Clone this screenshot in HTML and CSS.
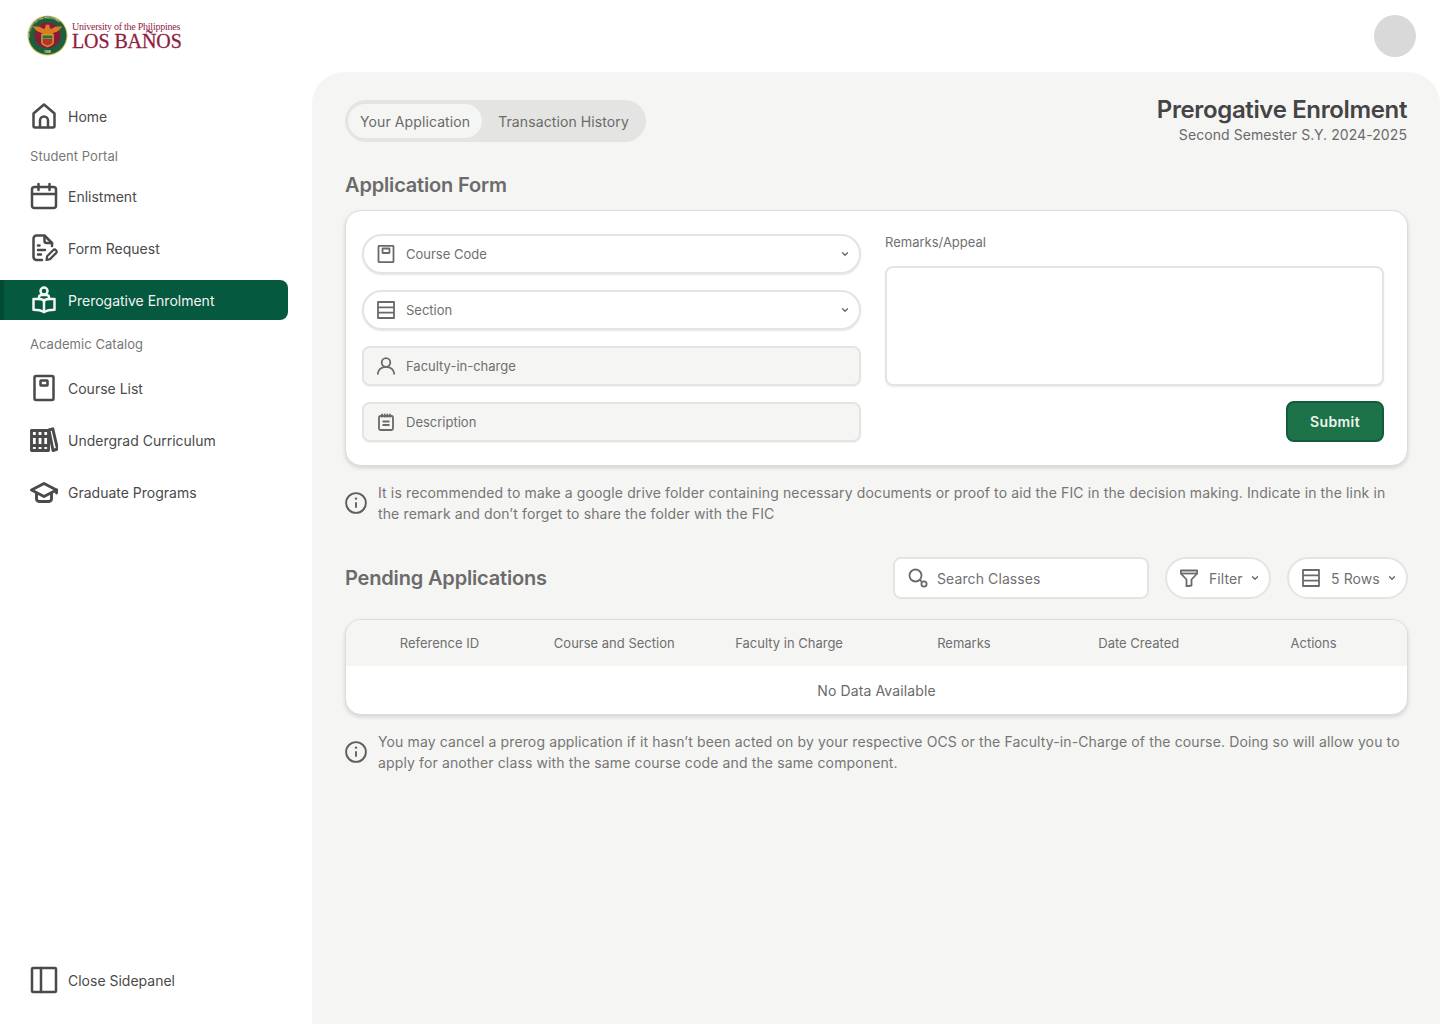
FILE: index.html
```html
<!DOCTYPE html>
<html lang="en">
<head>
<meta charset="utf-8">
<title>Prerogative Enrolment</title>
<link rel="stylesheet" href="styles.css">
</head>
<body>
<div class="app">
  <aside class="sidebar">
    <div class="brand">
      <svg class="seal" viewBox="0 0 42 42">
        <circle cx="21" cy="21" r="20.500" fill="#d8c76a"/>
        <circle cx="21" cy="21" r="19.500" fill="#1d5f3a"/>
        <circle cx="21" cy="21" r="13.200" fill="#8c1a3a"/>
        <defs><path id="sealring" d="M3.500 27A18 18 0 0 1 21 3.600 18 18 0 0 1 38.500 27"/></defs>
        <text class="seal-ring"><textPath href="#sealring" startOffset="6%">UNIVERSITY OF THE PHILIPPINES</textPath></text>
        <text class="seal-year" x="21" y="38.500" text-anchor="middle">1908</text>
        <path d="M5.500 11.500 13 12l4.500 2.500 1.500-2.500v-2h4v2l1.500 2.500L29 12l7.500-.5-4 4.500-2.500 1.500-2 .5-3 2h-8l-3-2-2-.5L9.500 16Z" fill="#dc7d26"/>
        <path d="M14.500 19.500h13v8.500c0 2.500-3.500 4-6.500 5-3-1-6.500-2.500-6.500-5Z" fill="#c9a02e"/>
        <path d="M16 21h10v3h-10Z" fill="#2f6e38"/>
        <path d="M16 24.500h10v3.500c0 1.800-2.800 2.800-5 3.500-2.200-.7-5-1.700-5-3.500Z" fill="#b8332a"/>
      </svg>
      <div class="brand-text">
        <div class="brand-top">University of the Philippines</div>
        <div class="brand-main">LOS BAÑOS</div>
      </div>
    </div>
    <nav class="nav">
      <a class="nav-item">
        <svg class="nav-icon" viewBox="0 0 28 28"><path d="M3.500 11.500 14 2.500l10.500 9V24a1.500 1.500 0 0 1-1.500 1.500H5A1.500 1.500 0 0 1 3.500 24Z"/><path d="M10 25v-6.500a4 4 0 0 1 8 0V25"/></svg>
        <span>Home</span>
      </a>
      <div class="nav-label">Student Portal</div>
      <div class="nav-group">
        <a class="nav-item">
          <svg class="nav-icon" viewBox="0 0 28 28"><rect x="2" y="5" width="24" height="21" rx="2.500"/><path d="M2 12h24M8.500 2v6M19.500 2v6"/></svg>
          <span>Enlistment</span>
        </a>
        <a class="nav-item">
          <svg class="nav-icon" viewBox="0 0 28 28"><path d="M12 26H6.500a3 3 0 0 1-3-3V4.500a3 3 0 0 1 3-3h8L22 9v3"/><path d="M14.500 2v5a2 2 0 0 0 2 2H22"/><path d="M8 11.500h1.500M8 16h7M8 20.500h3"/><path class="pencil" d="m16.500 26 .6-3.800 6-6a1.900 1.900 0 0 1 2.900 2.900l-6 6Z"/></svg>
          <span>Form Request</span>
        </a>
        <a class="nav-item nav-item-active">
          <svg class="nav-icon" viewBox="0 0 28 28"><circle cx="14" cy="5" r="3.500"/><path d="M9 13v-1.500A2.500 2.500 0 0 1 11.500 9h5a2.500 2.500 0 0 1 2.500 2.500V13"/><path d="M14 26c-2.500-1.500-5-2.300-10.500-2.300V13H9c2.500 0 5 1 5 3 0-2 2.500-3 5-3h5.500v10.700C19 23.700 16.500 24.500 14 26Z"/><path d="M14 16v10"/></svg>
          <span>Prerogative Enrolment</span>
        </a>
      </div>
      <div class="nav-label nav-label-spaced">Academic Catalog</div>
      <div class="nav-group">
        <a class="nav-item">
          <svg class="nav-icon" viewBox="0 0 28 28"><rect x="4.500" y="2" width="19" height="24" rx="1.500"/><rect x="10.500" y="6.500" width="7" height="5" rx=".5"/></svg>
          <span>Course List</span>
        </a>
        <a class="nav-item">
          <svg class="nav-icon nav-icon-heavy" viewBox="0 0 28 28"><path d="M1.500 4.500h17v20h-17ZM7.200 4.500v20M12.900 4.500v20M1.500 10.500h17M1.500 19.500h17"/><path d="m19 4 3.800-1.200L27.500 23l-4.500 1.500Z"/></svg>
          <span>Undergrad Curriculum</span>
        </a>
        <a class="nav-item">
          <svg class="nav-icon nav-icon-heavy" viewBox="0 0 28 28"><path d="M14 5.500 1.500 12 14 18.500 26.500 12Z"/><path d="M6.500 15.500V21c0 1.500 1.500 2.500 3 2.500h9c1.500 0 3-1 3-2.500v-5.500"/><path d="M26.500 12v3"/></svg>
          <span>Graduate Programs</span>
        </a>
      </div>
    </nav>
    <a class="nav-item nav-close">
      <svg class="nav-icon" viewBox="0 0 28 28"><rect x="2" y="2" width="24" height="24" rx="1"/><path d="M11 2v24"/></svg>
      <span>Close Sidepanel</span>
    </a>
  </aside>

  <div class="content">
    <header class="topbar"><div class="avatar"></div></header>
    <main class="panel">
      <div class="panel-head">
        <div class="tabs">
          <span class="tab tab-active">Your Application</span>
          <span class="tab">Transaction History</span>
        </div>
        <div class="page-title">
          <h1>Prerogative Enrolment</h1>
          <p>Second Semester S.Y. 2024-2025</p>
        </div>
      </div>

      <h2 class="form-heading">Application Form</h2>
      <section class="card form-card">
        <div class="form-col">
          <div class="field field-pill">
            <svg class="field-icon" viewBox="0 0 18 18"><rect x="1.500" y=".8" width="15" height="16.400" rx="1"/><rect x="5.500" y="3.500" width="7" height="4.500" rx=".5"/></svg>
            <span class="field-text">Course Code</span>
            <svg class="chev" viewBox="0 0 10 10"><path d="m2.500 3.800 2.500 2.500 2.500-2.500"/></svg>
          </div>
          <div class="field field-pill">
            <svg class="field-icon" viewBox="0 0 18 18"><rect x="1" y="1" width="16" height="16"/><path d="M1 6.300h16M1 11.700h16"/></svg>
            <span class="field-text">Section</span>
            <svg class="chev" viewBox="0 0 10 10"><path d="m2.500 3.800 2.500 2.500 2.500-2.500"/></svg>
          </div>
          <div class="field field-disabled">
            <svg class="field-icon" viewBox="0 0 18 18"><circle cx="9" cy="5.500" r="4.300"/><path d="M.8 17.500c0-4.500 3.500-7.700 8.200-7.700s8.200 3.200 8.200 7.700"/></svg>
            <span class="field-text">Faculty-in-charge</span>
          </div>
          <div class="field field-disabled">
            <svg class="field-icon" viewBox="0 0 18 18"><rect x="2" y="3" width="14" height="14" rx="1.500"/><path d="M5 .8v3.700M7.700 .8v3.700M10.300 .8v3.700M13 .8v3.700M5.500 8.500h7M5.500 12h7"/></svg>
            <span class="field-text">Description</span>
          </div>
        </div>
        <div class="form-col form-col-right">
          <label class="remarks-label">Remarks/Appeal</label>
          <div class="remarks-box"></div>
          <div class="submit-row"><button class="submit">Submit</button></div>
        </div>
      </section>

      <div class="note note-first">
        <svg class="info" viewBox="0 0 20 20"><circle cx="10" cy="10" r="9"/><path d="M10 9.300v5"/><circle class="dot" cx="10" cy="6" r="1.100"/></svg>
        <p>It is recommended to make a google drive folder containing necessary documents or proof to aid the FIC in the decision making. Indicate in the link in the remark and don’t forget to share the folder with the FIC</p>
      </div>

      <div class="pending-head">
        <h2>Pending Applications</h2>
        <div class="search">
          <svg class="field-icon search-icon" viewBox="0 0 20 20"><circle cx="7.500" cy="7.500" r="6"/><path d="m12 12 1.500 1.500"/><circle cx="16" cy="16" r="2.600"/></svg>
          <span class="field-text">Search Classes</span>
        </div>
        <div class="pill-btn pill-filter">
          <svg class="field-icon" viewBox="0 0 18 18"><path d="M.8 1.500h16.400v3L11.500 10.500v6L6.500 17.500v-7L.8 4.500Z"/><path d="M1 4.500h16"/></svg>
          <span class="field-text">Filter</span>
          <svg class="chev" viewBox="0 0 10 10"><path d="m2.500 3.800 2.500 2.500 2.500-2.500"/></svg>
        </div>
        <div class="pill-btn pill-rows">
          <svg class="field-icon" viewBox="0 0 18 18"><rect x="1" y="1" width="16" height="16"/><path d="M1 6.300h16M1 11.700h16"/></svg>
          <span class="field-text">5 Rows</span>
          <svg class="chev" viewBox="0 0 10 10"><path d="m2.500 3.800 2.500 2.500 2.500-2.500"/></svg>
        </div>
      </div>

      <section class="card table-card">
        <div class="table-head">
          <span>Reference ID</span>
          <span>Course and Section</span>
          <span>Faculty in Charge</span>
          <span>Remarks</span>
          <span>Date Created</span>
          <span>Actions</span>
        </div>
        <div class="table-empty">No Data Available</div>
      </section>

      <div class="note note-second">
        <svg class="info" viewBox="0 0 20 20"><circle cx="10" cy="10" r="9"/><path d="M10 9.300v5"/><circle class="dot" cx="10" cy="6" r="1.100"/></svg>
        <p>You may cancel a prerog application if it hasn’t been acted on by your respective OCS or the Faculty-in-Charge of the course. Doing so will allow you to apply for another class with the same course code and the same component.</p>
      </div>
    </main>
  </div>
</div>
</body>
</html>
```

FILE: styles.css
```css
* { box-sizing: border-box; }
html, body { margin: 0; padding: 0; }
body {
  background: #fff;
  color: #444;
  font-family: Inter, "Liberation Sans", sans-serif;
  font-size: 14px;
  overflow: hidden;
}
h1, h2, p { margin: 0; }

.app { display: flex; height: 1024px; width: 1440px; }

/* Sidebar */
.sidebar { width: 312px; flex: none; display: flex; flex-direction: column; }
.brand { height: 96px; display: flex; align-items: flex-start; padding: 15px 0 0 27px; gap: 4px; }
.seal { width: 41px; height: 41px; flex: none; }
.seal-ring { font: 700 2.600px "Liberation Sans", sans-serif; fill: #e8e4c0; }
.seal-year { font: 700 3px "Liberation Sans", sans-serif; fill: #e8e4c0; }
.brand-text { color: #8f1d3f; font-family: "Liberation Serif", serif; padding-top: 6px; }
.brand-top { font-size: 10px; line-height: 11px; letter-spacing: -.25px; white-space: nowrap; }
.brand-main { font-size: 20px; line-height: 18px; letter-spacing: -.1px; white-space: nowrap; -webkit-text-stroke: .3px #8f1d3f; }

.nav { display: flex; flex-direction: column; }
.nav-group { display: flex; flex-direction: column; gap: 12px; }
.nav-label {
  height: 40px;
  display: flex;
  align-items: center;
  padding-left: 30px;
  font-size: 13px;
  color: #777;
  letter-spacing: .05px;
}
.nav-label-spaced { margin: 4px 0; }
.nav-item {
  width: 288px;
  height: 40px;
  display: flex;
  align-items: center;
  gap: 10px;
  padding-left: 30px;
  font-size: 14px;
  color: #4a4a4a;
}
.nav-icon {
  width: 28px;
  height: 28px;
  flex: none;
  fill: none;
  stroke: currentColor;
  stroke-width: 2.500;
  stroke-linejoin: round;
  stroke-linecap: round;
}
.nav-icon-heavy { stroke-width: 2.900; }
.pencil { stroke-width: 2.200; }
.nav-item-active {
  background: #05593f;
  color: #f2f5f3;
  border-left: 4px solid #034a34;
  border-radius: 0 8px 8px 0;
  padding-left: 26px;
}
.nav-close { margin-top: auto; margin-bottom: 24px; }

/* Content */
.content { flex: 1; display: flex; flex-direction: column; min-width: 0; }
.topbar { height: 72px; display: flex; align-items: center; justify-content: flex-end; padding-right: 24px; flex: none; }
.avatar { width: 42px; height: 42px; border-radius: 50%; background: #d9d9d9; }

.panel {
  flex: 1;
  background: #f5f5f4;
  border-radius: 32px 32px 0 0;
  padding: 28px 32px 0 33px;
}
.panel-head { display: flex; justify-content: space-between; align-items: flex-start; }
.tabs {
  display: flex;
  align-items: center;
  height: 42px;
  width: 301px;
  padding: 4px 3px;
  background: #e4e4e3;
  border-radius: 21px;
}
.tab { padding: 0 12px; height: 34px; display: flex; align-items: center; color: #6a6a6a; letter-spacing: .1px; white-space: nowrap; }
.tab-active { background: #f5f5f4; border-radius: 17px; margin-right: 4px; }
.page-title { text-align: right; padding-right: 1px; }
.page-title h1 { font-size: 24px; line-height: 20px; font-weight: 600; color: #444; letter-spacing: -.36px; }
.page-title p { font-size: 14px; line-height: 16px; margin-top: 7px; color: #6a6a6a; letter-spacing: .08px; }

.form-heading { font-size: 20px; line-height: 24px; font-weight: 600; color: #6b6b6b; letter-spacing: -.17px; margin-top: 30px; }

.card { background: #fff; border: 1px solid #dcdcdb; border-radius: 16px; box-shadow: 0 2px 4px rgba(0,0,0,.14); }
.form-card {
  margin-top: 13px;
  height: 256px;
  display: grid;
  grid-template-columns: 499px 499px;
  column-gap: 24px;
  padding: 23px 0 0 16px;
}
.form-col { display: flex; flex-direction: column; gap: 16px; }
.field {
  height: 40px;
  display: flex;
  align-items: center;
  gap: 11px;
  padding: 0 9px 0 13px;
  border: 2px solid #e4e4e3;
}
.field-pill { border-radius: 20px; background: #fff; box-shadow: 0 1px 2px rgba(0,0,0,.1); }
.field-disabled { border-radius: 8px; background: #f5f5f4; box-shadow: 0 1px 2px rgba(0,0,0,.06); }
.field-icon {
  width: 18px;
  height: 18px;
  flex: none;
  fill: none;
  stroke: #6a6a6a;
  stroke-width: 1.800;
  stroke-linejoin: round;
}
.field-text { font-size: 13px; color: #6f6f6f; white-space: nowrap; }
.chev { width: 10px; height: 10px; margin-left: auto; fill: none; stroke: #666; stroke-width: 1.300; stroke-linecap: round; stroke-linejoin: round; flex: none; }

.form-col-right { gap: 0; }
.remarks-label { font-size: 13px; line-height: 17px; color: #6f6f6f; }
.remarks-box {
  height: 120px;
  margin-top: 15px;
  border: 2px solid #e4e4e3;
  border-radius: 8px;
  background: #fff;
  box-shadow: 0 1px 2px rgba(0,0,0,.08);
}
.submit-row { display: flex; justify-content: flex-end; margin-top: 15px; }
.submit {
  width: 98px;
  height: 41px;
  border: 2px solid #135c3a;
  border-radius: 8px;
  background: #1c7349;
  color: #eef4f0;
  font: 600 14px Inter, "Liberation Sans", sans-serif;
  letter-spacing: .4px;
}

.note { display: flex; align-items: center; gap: 11px; }
.note p { font-size: 14px; line-height: 21px; color: #757575; letter-spacing: .13px; }
.info { width: 22px; height: 22px; flex: none; fill: none; stroke: #5e5e5e; stroke-width: 1.700; }
.info .dot { fill: #5e5e5e; stroke: none; }
.note-first { margin-top: 16px; }
.note-first p { max-width: 1020px; }
.note-second { margin-top: 16px; }

.pending-head { display: flex; align-items: center; margin-top: 33px; height: 42px; }
.pending-head h2 { font-size: 20px; font-weight: 600; color: #6b6b6b; letter-spacing: -.17px; margin-right: auto; }
.search {
  width: 256px;
  height: 42px;
  display: flex;
  align-items: center;
  gap: 9px;
  padding-left: 13px;
  background: #fff;
  border: 2px solid #e4e4e3;
  border-radius: 8px;
}
.search-icon { width: 20px; height: 20px; }
.search .field-text, .pill-btn .field-text { font-size: 14px; letter-spacing: .1px; }
.pill-btn {
  height: 42px;
  display: flex;
  align-items: center;
  background: #fff;
  border: 2px solid #e4e4e3;
  border-radius: 21px;
  gap: 11px;
  padding: 0 9px 0 13px;
}
.pill-btn .chev { margin-left: -4px; }
.pill-filter { width: 106px; margin-left: 16px; }
.pill-rows { width: 121px; margin-left: 16px; }

.table-card { margin-top: 20px; height: 96px; overflow: hidden; display: flex; flex-direction: column; }
.table-head {
  height: 46px;
  flex: none;
  display: grid;
  grid-template-columns: repeat(6, 1fr);
  padding: 0 6px;
  background: #f5f5f4;
  align-items: center;
  text-align: center;
  font-size: 13px;
  color: #6f6f6f;
}
.table-empty { height: 48px; display: flex; align-items: center; justify-content: center; color: #6a6a6a; letter-spacing: .12px; }
```
